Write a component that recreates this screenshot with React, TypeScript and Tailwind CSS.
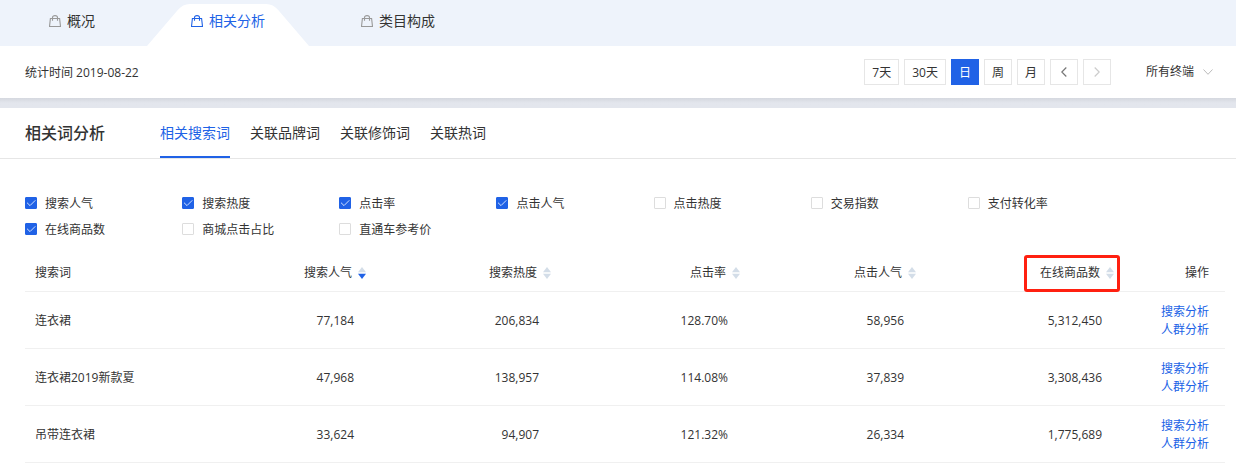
import { useState } from 'react';
import clsx from 'clsx';

const navTabs = ['概况', '相关分析', '类目构成'];
const wordTabs = ['相关搜索词', '关联品牌词', '关联修饰词', '关联热词'];
const periods = ['7天', '30天', '日', '周', '月'];

const metrics = [
  { name: '搜索人气', checked: true },
  { name: '搜索热度', checked: true },
  { name: '点击率', checked: true },
  { name: '点击人气', checked: true },
  { name: '点击热度', checked: false },
  { name: '交易指数', checked: false },
  { name: '支付转化率', checked: false },
  { name: '在线商品数', checked: true },
  { name: '商城点击占比', checked: false },
  { name: '直通车参考价', checked: false },
];

const columns = [
  { title: '搜索人气', width: 'w-[131px]', desc: true },
  { title: '搜索热度', width: 'w-[185px]' },
  { title: '点击率', width: 'w-[189px]' },
  { title: '点击人气', width: 'w-[176px]' },
  { title: '在线商品数', width: 'w-[198px]', marked: true },
];

const rows = [
  { word: '连衣裙', values: ['77,184', '206,834', '128.70%', '58,956', '5,312,450'] },
  { word: '连衣裙2019新款夏', values: ['47,968', '138,957', '114.08%', '37,839', '3,308,436'] },
  { word: '吊带连衣裙', values: ['33,624', '94,907', '121.32%', '26,334', '1,775,689'] },
];

function BagIcon({ active }: { active: boolean }) {
  return (
    <svg
      className={clsx('h-3 w-3', active ? 'text-[#2062e6]' : 'text-[#999999]')}
      viewBox="0 0 12 12"
      fill="none"
      stroke="currentColor"
      strokeWidth="1.1"
      aria-hidden="true"
    >
      <path d="M1.4 3.5h9.2l.9 8H.5z" />
      <path d="M3.5 5.8V2.6Q3.5.6 6 .6t2.5 2v3.2" />
    </svg>
  );
}

function NavBar() {
  const [current, setCurrent] = useState(1);

  return (
    <nav className="flex h-[46px] bg-[#eef3fb] pl-px">
      {navTabs.map((tab, index) => {
        const active = index === current;
        return (
          <button
            key={tab}
            type="button"
            onClick={() => setCurrent(index)}
            className={clsx('relative px-12 pb-1 text-sm', active ? 'text-[#2062e6]' : 'text-[#333333]')}
          >
            {active && (
              <svg
                className="absolute inset-x-1 bottom-0 h-[42px] w-[calc(100%-8px)]"
                viewBox="0 0 163 42"
                preserveAspectRatio="none"
                aria-hidden="true"
              >
                <path d="M0 42L31 6Q36 0 43 0H120Q127 0 132 6L163 42Z" fill="#fff" />
              </svg>
            )}
            <span className="relative flex items-center gap-1.5">
              <BagIcon active={active} />
              {tab}
            </span>
          </button>
        );
      })}
    </nav>
  );
}

function DateBar() {
  const [period, setPeriod] = useState('日');

  return (
    <div className="flex h-[52px] items-center bg-white pr-[23px] pl-[25px]">
      <span className="pt-0.5">统计时间 2019-08-22</span>
      <div className="ml-auto flex gap-[5px]">
        {periods.map((item) => (
          <button
            key={item}
            type="button"
            onClick={() => setPeriod(item)}
            className={clsx(
              'h-[26px] min-w-7 border px-[7px] pt-0.5',
              item === period ? 'border-[#2062e6] bg-[#2062e6] text-white' : 'border-[#e6e6e6] bg-white'
            )}
          >
            {item}
          </button>
        ))}
        <button
          type="button"
          aria-label="上一日"
          className="flex h-[26px] w-7 items-center justify-center border border-[#e6e6e6] text-[#777777]"
        >
          <svg className="h-2.5 w-1.5" viewBox="0 0 6 10" fill="none" stroke="currentColor" strokeWidth="1.2">
            <path d="M5.3.5L.8 5l4.5 4.5" />
          </svg>
        </button>
        <button
          type="button"
          aria-label="下一日"
          disabled
          className="flex h-[26px] w-7 items-center justify-center border border-[#e6e6e6] text-[#cccccc]"
        >
          <svg className="h-2.5 w-1.5" viewBox="0 0 6 10" fill="none" stroke="currentColor" strokeWidth="1.2">
            <path d="M.7.5L5.2 5 .7 9.5" />
          </svg>
        </button>
      </div>
      <div className="relative ml-[35px] flex items-center">
        <select aria-label="终端" className="w-[67px] appearance-none bg-transparent outline-none">
          <option>所有终端</option>
          <option>PC端</option>
          <option>无线端</option>
        </select>
        <svg
          className="pointer-events-none absolute right-0 h-1.5 w-2.5"
          viewBox="0 0 10 6"
          fill="none"
          stroke="#bbbbbb"
          aria-hidden="true"
        >
          <path d="M.5.5L5 5.3 9.5.5" />
        </svg>
      </div>
    </div>
  );
}

function Metric({ name, checked }: { name: string; checked: boolean }) {
  return (
    <label className="flex h-[26px] items-center gap-2">
      <span className="relative h-3 w-3">
        <input
          type="checkbox"
          defaultChecked={checked}
          className="peer block h-3 w-3 appearance-none rounded-[1px] border border-[#dddddd] bg-white checked:border-[#2062e6] checked:bg-[#2062e6]"
        />
        <svg
          className="pointer-events-none absolute inset-0 hidden h-3 w-3 peer-checked:block"
          viewBox="0 0 12 12"
          fill="none"
          stroke="#cfe0ff"
          aria-hidden="true"
        >
          <path d="M2 5.7L5 8.6 10.3 3.3" />
        </svg>
      </span>
      <span className="pt-0.5">{name}</span>
    </label>
  );
}

function SortButton({ title, desc = false }: { title: string; desc?: boolean }) {
  return (
    <button type="button" className="inline-flex items-center gap-1.5">
      {title}
      <svg className="h-3 w-2" viewBox="0 0 8 12" aria-hidden="true">
        <path d="M4 0L8 5.3H0z" fill="#d3dde8" />
        <path d="M4 12L0 6.7h8z" fill={desc ? '#2062e6' : '#d3dde8'} />
      </svg>
    </button>
  );
}

function ResultTable() {
  return (
    <table className="mt-3 w-full table-fixed border-separate border-spacing-0">
      <thead>
        <tr className="h-[38px]">
          <th className="border-b border-[#f0f0f0] px-2.5 text-left font-normal">搜索词</th>
          {columns.map((column) => (
            <th
              key={column.title}
              className={clsx('relative border-b border-[#f0f0f0] pr-2.5 text-right font-normal', column.width)}
            >
              <SortButton title={column.title} desc={column.desc} />
              {column.marked && (
                <span className="pointer-events-none absolute right-1 -bottom-px h-[37px] w-24 rounded-[3px] border-3 border-[#ff2010]" />
              )}
            </th>
          ))}
          <th className="w-[101px] border-b border-[#f0f0f0] pr-4 text-right font-normal">操作</th>
        </tr>
      </thead>
      <tbody>
        {rows.map((row) => (
          <tr key={row.word} className="h-[57px]">
            <td className="border-b border-[#f0f0f0] px-2.5 pt-0.5">{row.word}</td>
            {row.values.map((value, index) => (
              <td key={index} className="border-b border-[#f0f0f0] pt-0.5 pr-[22px] text-right">
                {value}
              </td>
            ))}
            <td className="border-b border-[#f0f0f0] pt-0.5 pr-4 text-right text-[#2062e6]">
              <a href="#search" className="block">
                搜索分析
              </a>
              <a href="#crowd" className="block">
                人群分析
              </a>
            </td>
          </tr>
        ))}
      </tbody>
    </table>
  );
}

export default function App() {
  const [wordTab, setWordTab] = useState(0);

  return (
    <div className="bg-white font-['Open_Sans','Noto_Sans_CJK_SC',sans-serif] text-xs leading-[18px] text-[#333333]">
      <NavBar />
      <DateBar />
      <div className="h-2.5 bg-linear-to-b from-[#d5d8df] to-[#e3e6ed] to-50%" />
      <section>
        <header className="flex h-[51px] items-stretch border-b border-[#e6e6e6] pl-[25px]">
          <h2 className="flex items-center text-base font-medium">相关词分析</h2>
          <div className="ml-[55px] flex gap-5">
            {wordTabs.map((tab, index) => (
              <button
                key={tab}
                type="button"
                onClick={() => setWordTab(index)}
                className={clsx(
                  'border-y-2 border-t-transparent text-sm',
                  index === wordTab ? 'border-b-[#2062e6] text-[#2062e6]' : 'border-b-transparent'
                )}
              >
                {tab}
              </button>
            ))}
          </div>
        </header>
        <div className="pt-[31px] pr-[11px] pb-1 pl-[25px]">
          <div className="mr-[100px] grid grid-cols-7">
            {metrics.map((metric) => (
              <Metric key={metric.name} name={metric.name} checked={metric.checked} />
            ))}
          </div>
          <ResultTable />
        </div>
      </section>
    </div>
  );
}
